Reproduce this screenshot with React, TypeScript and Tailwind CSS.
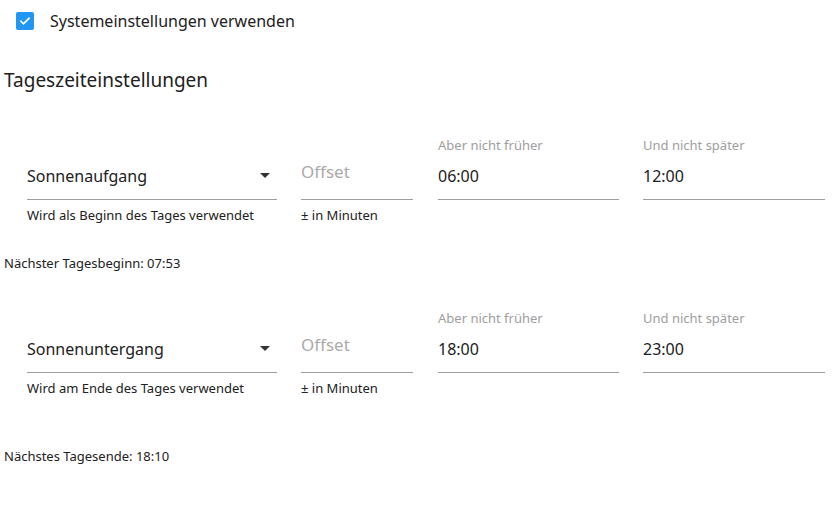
import React from "react";

type Row = {
  value: string;
  hint: string;
  from: string;
  to: string;
};

const rows: Row[] = [
  { value: "Sonnenaufgang", hint: "Wird als Beginn des Tages verwendet", from: "06:00", to: "12:00" },
  { value: "Sonnenuntergang", hint: "Wird am Ende des Tages verwendet", from: "18:00", to: "23:00" },
];

const Field = ({ label, value, width }: { label: string; value: string; width: string }) => (
  <div className={width}>
    <div className="h-4 text-[13px] leading-4 text-[#9e9e9e]">{label}</div>
    <div className="h-[47px] flex items-center border-b border-[#9e9e9e] text-base text-[#212121]">
      {value}
    </div>
  </div>
);

const TimeRow = ({ row }: { row: Row }) => (
  <div className="flex gap-6 pl-[23px]">
    <div className="w-[250px]">
      <div className="h-4" />
      <div className="h-[47px] flex items-center justify-between border-b border-[#9e9e9e] text-base text-[#212121]">
        <span>{row.value}</span>
        <span className="mr-[7px] mt-[-2px] w-0 h-0 border-x-[5px] border-x-transparent border-t-[5px] border-t-[#333]" />
      </div>
      <div className="mt-[7px] h-4 text-[13px] leading-4 text-[#212121]">{row.hint}</div>
    </div>
    <div className="w-[112px]">
      <div className="h-4" />
      <div className="h-[47px] flex items-center pb-2 border-b border-[#9e9e9e] text-[17px] text-[#aaaaaa]">
        Offset
      </div>
      <div className="mt-[7px] h-4 text-[13px] leading-4 text-[#212121]">± in Minuten</div>
    </div>
    <Field label="Aber nicht früher" value={row.from} width="w-[181px] ml-px" />
    <Field label="Und nicht später" value={row.to} width="w-[182px]" />
  </div>
);

export default function App() {
  return (
    <div className="min-h-screen bg-white pl-1 text-[#212121]" style={{ fontFamily: '"Noto Sans", "Open Sans", sans-serif' }}>
      <div className="flex items-center h-[42px] pl-3">
        <span className="w-[18px] h-[18px] rounded-[2px] bg-[#2196f3] flex items-center justify-center">
          <svg width="12" height="12" viewBox="0 0 24 24" fill="none" stroke="white" strokeWidth="3.5" strokeLinecap="square">
            <path d="M4 12.5l5 5L20 6.5" />
          </svg>
        </span>
        <span className="ml-4 text-base">Systemeinstellungen verwenden</span>
      </div>

      <h2 className="mt-[26px] text-[19px] leading-6">Tageszeiteinstellungen</h2>

      <div className="mt-[45px]">
        <TimeRow row={rows[0]} />
      </div>
      <div className="mt-8 h-4 text-[13px] leading-4">Nächster Tagesbeginn: 07:53</div>

      <div className="mt-[39px]">
        <TimeRow row={rows[1]} />
      </div>
      <div className="mt-[52px] h-4 text-[13px] leading-4">Nächstes Tagesende: 18:10</div>
    </div>
  );
}
